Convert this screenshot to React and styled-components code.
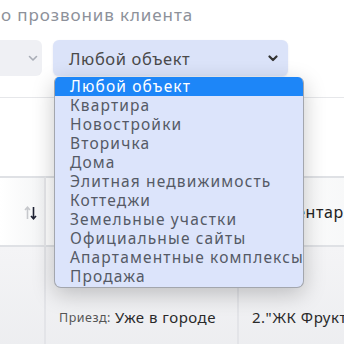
import React from "react";
import styled, { createGlobalStyle } from "styled-components";

const Global = createGlobalStyle`
  html, body { margin: 0; padding: 0; background: #fff; }
  body { width: 344px; height: 344px; overflow: hidden; font-family: "Noto Sans", "DejaVu Sans", sans-serif; }
  #root { width: 344px; height: 344px; overflow: hidden; }
`;

const Page = styled.div`
  position: relative;
  width: 344px;
  height: 344px;
  overflow: hidden;
  background: #fff;
`;

const Title = styled.div`
  height: 30px;
  padding-left: 1px;
  font-size: 17px;
  letter-spacing: 0.9px;
  line-height: 30px;
  color: #8d919a;
  white-space: nowrap;
`;

const Filters = styled.div`
  display: flex;
  gap: 11px;
  margin-top: 10px;
  height: 36px;
  margin-left: -78px;
`;

const Select = styled.div`
  position: relative;
  width: ${(p) => p.$w}px;
  height: 36px;
  border-radius: 6px;
  background: ${(p) => (p.$active ? "#dbe3f9" : "#eff0f4")};
  box-shadow: ${(p) => (p.$active ? "0 1px 2px rgba(80,100,160,0.15)" : "none")};
  display: flex;
  align-items: center;
  padding: 0 ${(p) => p.$pr}px 0 16px;
  box-sizing: border-box;
  font-size: 16.5px;
  letter-spacing: 0.6px;
  color: #4a4a4a;
`;

const SelectLabel = styled.span`
  flex: 1;
  white-space: nowrap;
`;

const Chevron = styled.svg`
  width: 10px;
  height: 7px;
  flex: none;
`;

const Divider = styled.div`
  margin-top: 21px;
  border-top: 1px solid #e6e7ea;
  height: 78px;
`;

const Table = styled.div`
  display: grid;
  grid-template-columns: 46px 193px 1fr;
`;

const HeadCell = styled.div`
  height: 71px;
  box-sizing: border-box;
  border-top: 2px solid #dfe1e5;
  border-bottom: 2px solid #dfe1e5;
  border-right: ${(p) => (p.$last ? "none" : "2px solid #e6e7ea")};
  background: linear-gradient(90deg, #ffffff 0%, #f4f5f6 100%);
  display: flex;
  align-items: center;
  justify-content: ${(p) => (p.$center ? "flex-end" : "flex-start")};
  padding: ${(p) => (p.$center ? "0 7px 0 0" : "0 0 0 11px")};
  font-size: 16px;
  letter-spacing: 0.6px;
  color: #222;
  white-space: nowrap;
`;

const SortIcon = styled.svg`
  width: 13px;
  height: 14px;
  margin-top: 2px;
`;

const BodyCell = styled.div`
  height: 140px;
  box-sizing: border-box;
  border-right: ${(p) => (p.$last ? "none" : "2px solid #e3e4e8")};
  background: linear-gradient(180deg, #f4f4f6 0%, #eaebee 100%);
  display: flex;
  align-items: center;
  padding-left: ${(p) => p.$pl || 0}px;
  font-size: 15px;
  letter-spacing: 0.5px;
  color: #2a2a2a;
  white-space: nowrap;
`;

const Muted = styled.span`
  font-size: 12.5px;
  color: #555;
  margin-right: 4px;
`;

const Menu = styled.ul`
  position: absolute;
  left: 54px;
  top: 77px;
  width: 250px;
  margin: 0;
  padding: 0 0 1px;
  list-style: none;
  box-sizing: border-box;
  background: #dce4fb;
  border: 1px solid #a3a6ad;
  border-top: none;
  border-radius: 5px 6px 7px 7px;
  overflow: hidden;
  box-shadow: 0 6px 22px rgba(0, 0, 0, 0.22);
  z-index: 5;
`;

const Option = styled.li`
  height: 19px;
  line-height: 19px;
  padding-left: 15px;
  font-size: 15.5px;
  letter-spacing: 1.15px;
  color: ${(p) => (p.$sel ? "#fff" : "#555a66")};
  background: ${(p) => (p.$sel ? "#1d86f8" : "transparent")};
  white-space: nowrap;
`;

const options = [
  "Любой объект",
  "Квартира",
  "Новостройки",
  "Вторичка",
  "Дома",
  "Элитная недвижимость",
  "Коттеджи",
  "Земельные участки",
  "Официальные сайты",
  "Апартаментные комплексы",
  "Продажа",
];

const ChevronIcon = ({ color, w = 2 }) => (
  <Chevron viewBox="0 0 10 7">
    <path d="M1.5 1.5 L5 5 L8.5 1.5" fill="none" stroke={color} strokeWidth={w} strokeLinecap="round" strokeLinejoin="round" />
  </Chevron>
);

export default function App() {
  return (
    <Page>
      <Global />
      <Title>о прозвонив клиента</Title>
      <Filters>
        <Select $w={120} $pr={4}>
          <SelectLabel />
          <ChevronIcon color="#a9adb6" w={1.6} />
        </Select>
        <Select $w={235} $active $pr={10}>
          <SelectLabel>Любой объект</SelectLabel>
          <ChevronIcon color="#333" w={2.2} />
        </Select>
      </Filters>
      <Divider />
      <Table>
        <HeadCell $center>
          <SortIcon viewBox="0 0 13 14">
            <path d="M3.5 13 V1.5 M1 4 L3.5 1.3 L6 4" fill="none" stroke="#c6c8cc" strokeWidth="1.6" />
            <path d="M9.5 1 V12.5 M7 10 L9.5 12.7 L12 10" fill="none" stroke="#1f2233" strokeWidth="1.6" />
          </SortIcon>
        </HeadCell>
        <HeadCell>Объект</HeadCell>
        <HeadCell $last>Комментарий</HeadCell>
        <BodyCell />
        <BodyCell $pl={13}>
          <Muted>Приезд:</Muted>Уже в городе
        </BodyCell>
        <BodyCell $last $pl={13}>2."ЖК Фруктовый"</BodyCell>
      </Table>
      <Menu>
        {options.map((o, i) => (
          <Option key={o} $sel={i === 0}>{o}</Option>
        ))}
      </Menu>
    </Page>
  );
}
